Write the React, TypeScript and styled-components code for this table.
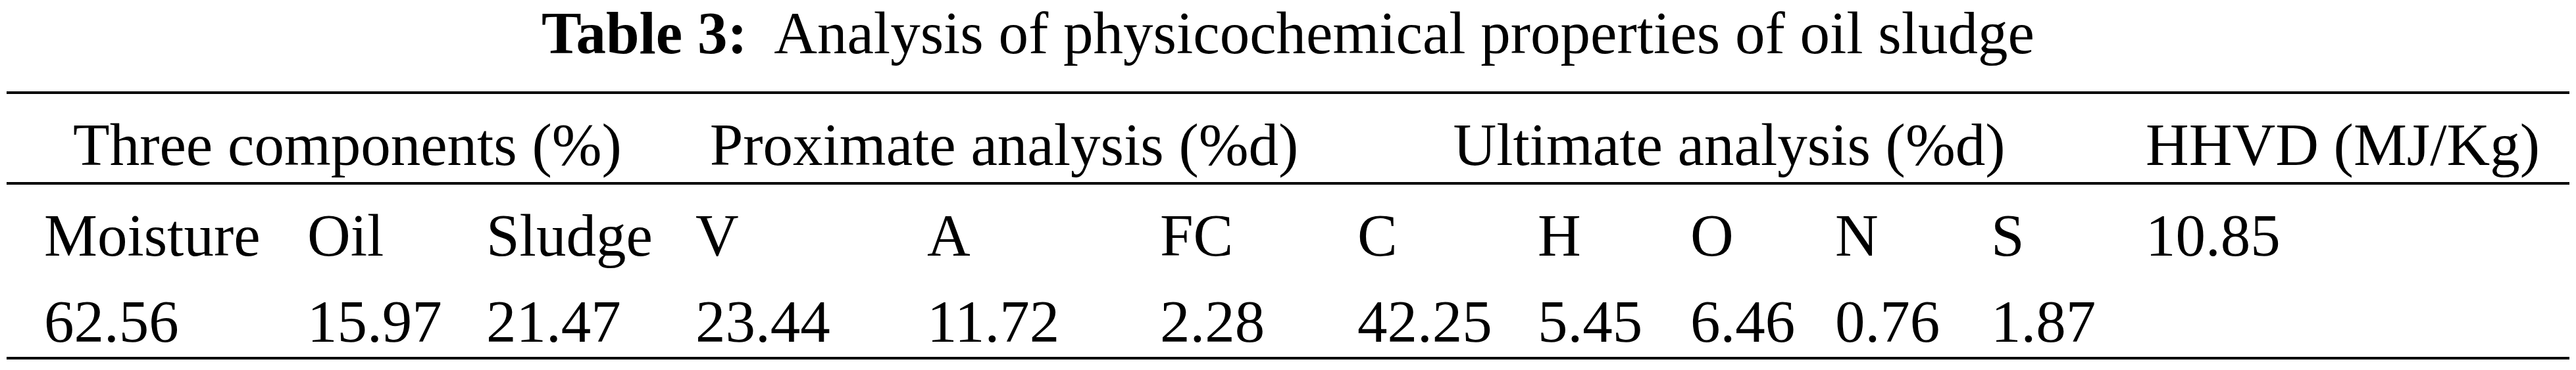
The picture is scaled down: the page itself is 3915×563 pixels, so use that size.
import React from 'react';
import styled, { createGlobalStyle } from 'styled-components';

const GlobalStyle = createGlobalStyle`
  html, body {
    margin: 0;
    padding: 0;
    background: #ffffff;
  }
  body {
    font-family: "Liberation Serif", "Times New Roman", serif;
    color: #000000;
  }
`;

// column widths include 34px of padding on each side of the cell
const COLUMNS = '400px 272px 318px 352px 354px 300px 274px 232px 220px 237px 235px 637px';

const groups = [
  { label: 'Three components (%)', span: 3 },
  { label: 'Proximate analysis (%d)', span: 3 },
  { label: 'Ultimate analysis (%d)', span: 5 },
  { label: 'HHVD (MJ/Kg)', span: 1 },
];

const labels = ['Moisture', 'Oil', 'Sludge', 'V', 'A', 'FC', 'C', 'H', 'O', 'N', 'S', '10.85'];
const values = ['62.56', '15.97', '21.47', '23.44', '11.72', '2.28', '42.25', '5.45', '6.46', '0.76', '1.87', ''];

export default function App() {
  return (
    <>
      <GlobalStyle />
      <StyledPage>
        <StyledCaption>
          <strong>Table 3:</strong>
          {'  Analysis of physicochemical properties of oil sludge'}
        </StyledCaption>
        <StyledTable>
          <StyledRow $ruled>
            {groups.map((group) => (
              <StyledHeadCell key={group.label} $span={group.span}>
                {group.label}
              </StyledHeadCell>
            ))}
          </StyledRow>
          <StyledRow $tight>
            {labels.map((label, index) => (
              <StyledCell key={index}>{label}</StyledCell>
            ))}
          </StyledRow>
          <StyledRow $tight>
            {values.map((value, index) => (
              <StyledCell key={index}>{value}</StyledCell>
            ))}
          </StyledRow>
        </StyledTable>
      </StyledPage>
    </>
  );
}

const StyledPage = styled.div`
  width: 3915px;
`;

const StyledCaption = styled.div`
  font-size: 91px;
  line-height: 101px;
  text-align: center;
  white-space: pre;
  margin: 0 0 38px;

  strong {
    font-weight: 700;
  }
`;

const StyledTable = styled.div`
  margin: 0 10px;
  border-top: 4px solid #000;
  border-bottom: 4px solid #000;
`;

const StyledRow = styled.div<{ $ruled?: boolean; $tight?: boolean }>`
  display: grid;
  grid-template-columns: ${COLUMNS};
  padding: 28px 41px ${({ $tight }) => ($tight ? '3px' : '6px')} 23px;
  border-bottom: ${({ $ruled }) => ($ruled ? '4px solid #000' : 'none')};
`;

const StyledCell = styled.div`
  font-size: 91px;
  line-height: 100px;
  padding: 0 34px;
  white-space: nowrap;
  text-align: left;
`;

const StyledHeadCell = styled(StyledCell)<{ $span: number }>`
  grid-column: span ${({ $span }) => $span};
  text-align: center;
`;
